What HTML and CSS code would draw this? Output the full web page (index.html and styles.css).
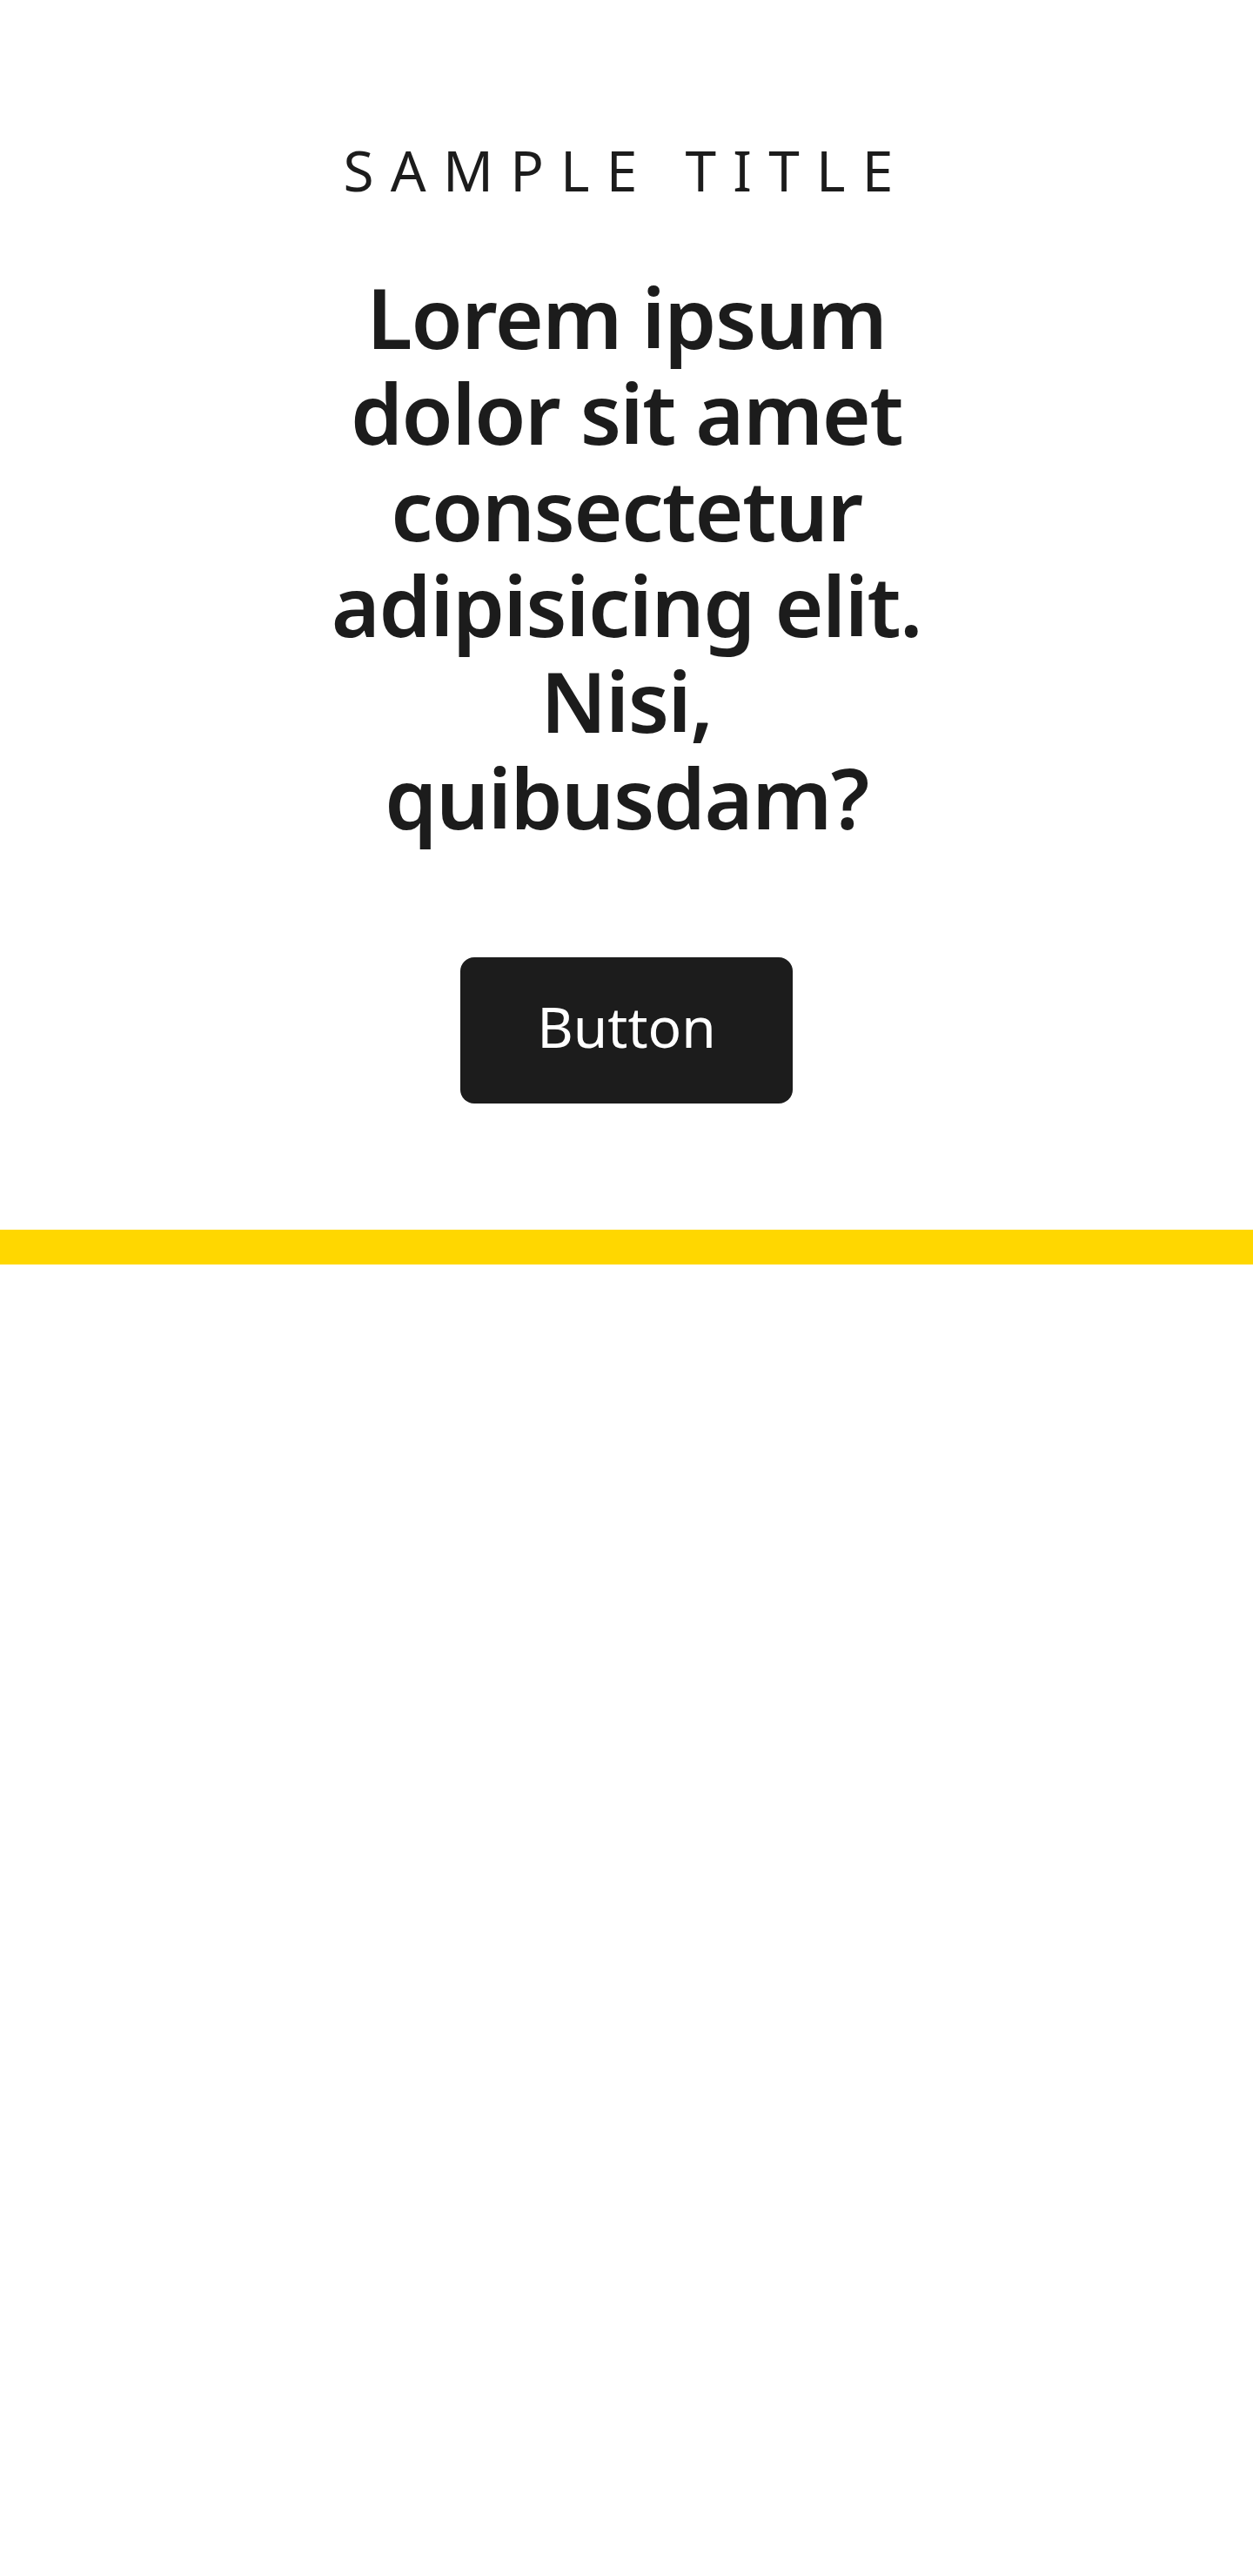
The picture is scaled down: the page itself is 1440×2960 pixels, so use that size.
FILE: index.html
```html
<!DOCTYPE html>
<html lang="en">
<head>
<meta charset="utf-8">
<title>Sample Title</title>
<link rel="stylesheet" href="styles.css">
</head>
<body>
  <section class="hero">
    <p class="eyebrow">Sample Title</p>
    <h1 class="headline">Lorem ipsum dolor sit amet consectetur adipisicing elit. Nisi, quibusdam?</h1>
    <a class="btn" href="#">Button</a>
  </section>
  <div class="bar"></div>
</body>
</html>
```
FILE: styles.css
```css
html, body {
  margin: 0;
  padding: 0;
  background: #ffffff;
}
body {
  font-family: "Noto Sans", "DejaVu Sans", sans-serif;
  color: #1c1c1c;
}
.hero {
  display: flex;
  flex-direction: column;
  align-items: center;
  padding-top: 158px;
}
.eyebrow {
  margin: 0;
  font-size: 64px;
  line-height: 1.2;
  font-weight: 400;
  text-transform: uppercase;
  letter-spacing: 0.3em;
}
.headline {
  margin: 74px 0 0;
  width: 740px;
  font-size: 96px;
  line-height: 1.15;
  font-weight: 600;
  letter-spacing: -0.015em;
  text-align: center;
}
.btn {
  margin-top: 129px;
  display: inline-block;
  background: #1c1c1c;
  color: #ffffff;
  text-decoration: none;
  font-size: 64px;
  line-height: 1.15;
  padding: 43px 88px 51px;
  border-radius: 16px;
}
.bar {
  margin-top: 145px;
  height: 40px;
  background: #ffd700;
}
```
